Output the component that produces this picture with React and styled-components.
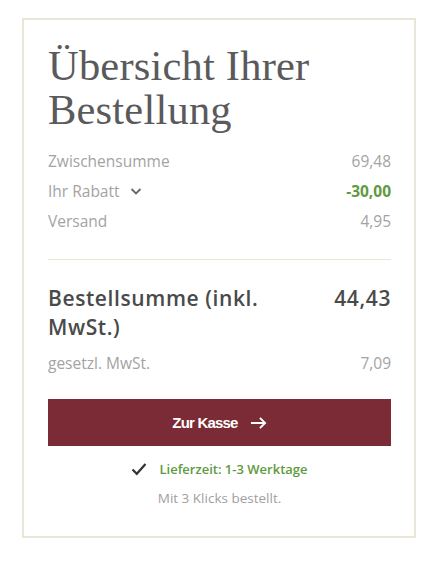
import React from 'react';
import styled, { createGlobalStyle } from 'styled-components';

const GlobalStyle = createGlobalStyle`
  body {
    margin: 0;
    background: #ffffff;
    font-family: "Open Sans", Arial, sans-serif;
  }
`;

export default function App() {
  const rows = [
    { label: 'Zwischensumme', value: '69,48' },
    { label: 'Ihr Rabatt', value: '-30,00', discount: true },
    { label: 'Versand', value: '4,95' },
  ];

  return (
    <>
      <GlobalStyle />
      <Card>
        <Title>Übersicht Ihrer Bestellung</Title>
        <Rows>
          {rows.map((r) => (
            <Row key={r.label}>
              <Label>
                {r.label}
                {r.discount && (
                  <Chevron viewBox="0 0 16 16">
                    <path d="M3.5 6 L8 10.5 L12.5 6" />
                  </Chevron>
                )}
              </Label>
              <Value $discount={r.discount}>{r.value}</Value>
            </Row>
          ))}
        </Rows>
        <Divider />
        <TotalRow>
          <TotalLabel>Bestellsumme (inkl. MwSt.)</TotalLabel>
          <TotalValue>44,43</TotalValue>
        </TotalRow>
        <TaxRow>
          <Label>gesetzl. MwSt.</Label>
          <Value>7,09</Value>
        </TaxRow>
        <CheckoutButton>
          Zur Kasse
          <Arrow viewBox="0 0 18 14">
            <path d="M1 7 H16 M10.5 1.5 L16 7 L10.5 12.5" />
          </Arrow>
        </CheckoutButton>
        <Delivery>
          <Check viewBox="0 0 16 14">
            <path d="M1.5 7.5 L5.8 11.8 L14.5 2" />
          </Check>
          Lieferzeit: 1-3 Werktage
        </Delivery>
        <Note>Mit 3 Klicks bestellt.</Note>
      </Card>
    </>
  );
}

const Card = styled.div`
  box-sizing: border-box;
  width: 394px;
  margin: 18px 0 0 22px;
  border: 2px solid #e9e6d8;
  padding: 24px 23px 29px 24px;
  background: #fff;
`;

const Title = styled.h2`
  margin: 0 0 18px;
  font-family: "Liberation Serif", "Times New Roman", serif;
  font-weight: 400;
  font-size: 42.5px;
  line-height: 44px;
  color: #5a5a5d;
  letter-spacing: 0.2px;
`;

const Rows = styled.div`
  display: grid;
  gap: 9px;
`;

const Row = styled.div`
  display: flex;
  justify-content: space-between;
  align-items: center;
  height: 21px;
  font-size: 15.5px;
`;

const Label = styled.span`
  display: flex;
  align-items: center;
  gap: 8px;
  color: #a3a3a3;
`;

const Value = styled.span`
  color: ${(p) => (p.$discount ? '#5e9a40' : '#a3a3a3')};
  font-weight: ${(p) => (p.$discount ? 700 : 400)};
`;

const Chevron = styled.svg`
  width: 16px;
  height: 16px;
  fill: none;
  stroke: #666;
  stroke-width: 1.8;
`;

const Divider = styled.hr`
  margin: 28px 0 24px;
  border: 0;
  border-top: 1px solid #e9e6d8;
`;

const TotalRow = styled.div`
  display: flex;
  justify-content: space-between;
  align-items: flex-start;
  gap: 20px;
  font-size: 21px;
  line-height: 29px;
  font-weight: 600;
  letter-spacing: 0.6px;
  color: #4a4a4a;
`;

const TotalLabel = styled.div`
  max-width: 250px;
`;

const TotalValue = styled.div``;

const TaxRow = styled(Row)`
  margin-top: 10px;
`;

const CheckoutButton = styled.button`
  display: flex;
  width: 100%;
  height: 47px;
  margin-top: 26px;
  align-items: center;
  justify-content: center;
  gap: 12px;
  border: 0;
  background: #7a2b35;
  color: #fff;
  font-family: "Liberation Sans", Arial, sans-serif;
  font-weight: 700;
  font-size: 15px;
  letter-spacing: -0.8px;
`;

const Arrow = styled.svg`
  width: 17px;
  height: 14px;
  fill: none;
  stroke: #fff;
  stroke-width: 2;
`;

const Delivery = styled.div`
  display: flex;
  justify-content: center;
  align-items: center;
  gap: 12px;
  margin-top: 14px;
  color: #5e9a40;
  font-size: 13px;
  font-weight: 600;
`;

const Check = styled.svg`
  width: 16px;
  height: 14px;
  fill: none;
  stroke: #333;
  stroke-width: 2.2;
`;

const Note = styled.div`
  margin-top: 11px;
  text-align: center;
  color: #a0a0a0;
  font-size: 13.5px;
`;
